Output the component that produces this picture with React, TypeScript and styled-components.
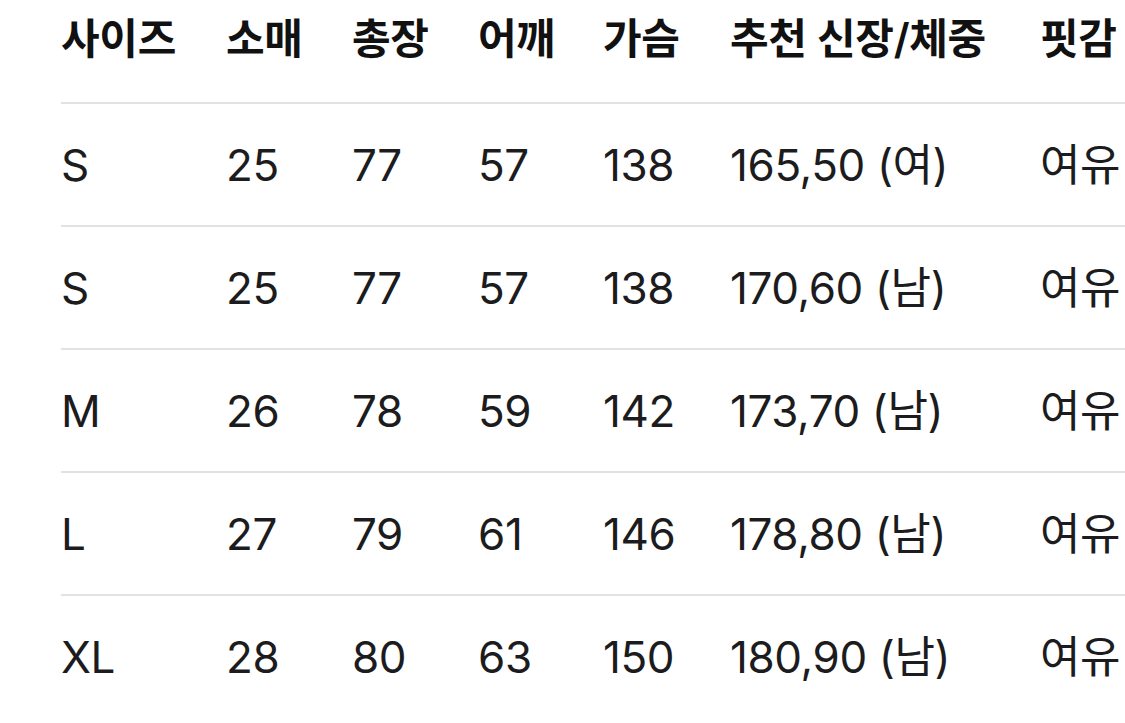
import React from 'react';
import styled, { createGlobalStyle } from 'styled-components';

const GlobalStyle = createGlobalStyle`
    html, body {
        margin: 0;
        padding: 0;
        background: #ffffff;
        overflow: hidden;
    }
    body {
        font-family: Inter, "Noto Sans CJK KR", "Noto Sans", sans-serif;
        color: #1c1c1e;
    }
`;

const Page = styled.div`
    width: 1125px;
    height: 723px;
    padding-left: 61px;
    box-sizing: border-box;
    overflow: hidden;
`;

const Table = styled.table`
    border-collapse: collapse;
    table-layout: fixed;
    width: 1125px;
`;

const HeadCell = styled.th<{ width: number }>`
    width: ${({ width }) => width}px;
    height: 103px;
    padding: 0 0 24px;
    text-align: left;
    font-size: 42px;
    line-height: 50px;
    font-weight: 600;
    color: #111111;
    white-space: nowrap;
    border-bottom: 2px solid #e2e2e2;
    box-sizing: border-box;
    letter-spacing: -0.3px;
`;

const Row = styled.tr`
    border-bottom: 2px solid #e2e2e2;
    &:last-child {
        border-bottom: none;
    }
`;

const Cell = styled.td`
    height: 121px;
    padding: 0;
    text-align: left;
    font-size: 44px;
    line-height: 50px;
    font-weight: 400;
    color: #1c1c1e;
    white-space: nowrap;
    letter-spacing: -0.4px;
`;

const columns = [
    { label: '사이즈', width: 165 },
    { label: '소매', width: 126 },
    { label: '총장', width: 126 },
    { label: '어깨', width: 125 },
    { label: '가슴', width: 127 },
    { label: '추천 신장/체중', width: 310 },
    { label: '핏감', width: 146 },
];

const rows = [
    ['S', '25', '77', '57', '138', '165,50 (여)', '여유'],
    ['S', '25', '77', '57', '138', '170,60 (남)', '여유'],
    ['M', '26', '78', '59', '142', '173,70 (남)', '여유'],
    ['L', '27', '79', '61', '146', '178,80 (남)', '여유'],
    ['XL', '28', '80', '63', '150', '180,90 (남)', '여유'],
];

const App: React.FC = () => {
    return (
        <>
            <GlobalStyle />
            <Page>
                <Table>
                    <thead>
                        <tr>
                            {columns.map((col) => (
                                <HeadCell key={col.label} width={col.width}>
                                    {col.label}
                                </HeadCell>
                            ))}
                        </tr>
                    </thead>
                    <tbody>
                        {rows.map((row, index) => (
                            <Row key={index}>
                                {row.map((value, i) => (
                                    <Cell key={i}>{value}</Cell>
                                ))}
                            </Row>
                        ))}
                    </tbody>
                </Table>
            </Page>
        </>
    );
};

export default App;
